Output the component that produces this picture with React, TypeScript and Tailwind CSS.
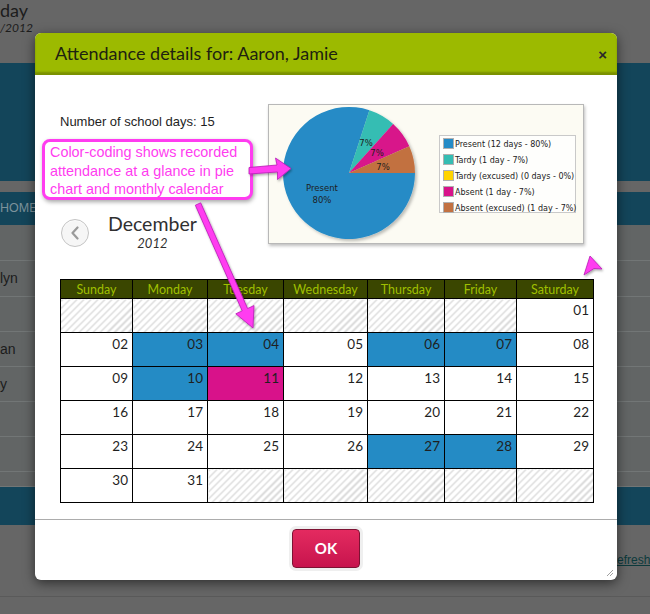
import React from "react"

const rows: (string | null)[][] = [
  [null, null, null, null, null, null, "01"],
  ["02", "03", "04", "05", "06", "07", "08"],
  ["09", "10", "11", "12", "13", "14", "15"],
  ["16", "17", "18", "19", "20", "21", "22"],
  ["23", "24", "25", "26", "27", "28", "29"],
  ["30", "31", null, null, null, null, null],
]
const present = new Set(["03", "04", "06", "07", "10", "27", "28"])
const absent = new Set(["11"])
const weekdays = ["Sunday", "Monday", "Tuesday", "Wednesday", "Thursday", "Friday", "Saturday"]
const colWidths = [72, 75, 76, 84, 77, 72, 77]

const legend = [
  { color: "#258bc6", label: "Present (12 days - 80%)" },
  { color: "#35bdb3", label: "Tardy (1 day - 7%)" },
  { color: "#ffd400", label: "Tardy (excused) (0 days - 0%)" },
  { color: "#d8128a", label: "Absent (1 day - 7%)" },
  { color: "#c27141", label: "Absent (excused) (1 day - 7%)" },
]

const hatch =
  "bg-[repeating-linear-gradient(135deg,#dcdcdc_0px,#dcdcdc_1.6px,#ffffff_1.6px,#ffffff_5px)]"

// background page rows (already dimmed by the modal overlay)
const pageRows = [
  { h: "h-[36px]", name: "" },
  { h: "h-[36px]", name: "lyn" },
  { h: "h-[35px]", name: "" },
  { h: "h-[35px]", name: "an" },
  { h: "h-[35px]", name: "y" },
  { h: "h-[35px]", name: "" },
  { h: "h-[35px]", name: "" },
  { h: "h-[15px]", name: "" },
]

const PieChart = () => (
  <svg width="314" height="138" viewBox="0 0 314 138" className="block">
    <defs>
      <filter id="pieShadow" x="-10%" y="-10%" width="130%" height="130%">
        <feDropShadow dx="2" dy="2" stdDeviation="1.5" floodColor="#000" floodOpacity="0.25" />
      </filter>
    </defs>
    <g filter="url(#pieShadow)">
      <path d="M80,68 L146,68 A66,66 0 1 1 100.39,5.23 Z" fill="#258bc6" />
      <path d="M80,68 L100.39,5.23 A66,66 0 0 1 124.16,18.95 Z" fill="#35bdb3" />
      <path d="M80,68 L124.16,18.95 A66,66 0 0 1 140.29,41.16 Z" fill="#d8128a" />
      <path d="M80,68 L140.29,41.16 A66,66 0 0 1 146,68 Z" fill="#c27141" />
    </g>
    <g fontFamily="'DejaVu Sans', sans-serif" fontSize="8.5" fill="#1e1e1e" textAnchor="middle">
      <text x="97" y="41">7%</text>
      <text x="108" y="51">7%</text>
      <text x="114" y="65">7%</text>
      <text x="53" y="86">Present</text>
      <text x="53" y="98">80%</text>
    </g>
    <rect x="170.5" y="30.5" width="136" height="77" fill="#fefefc" stroke="#c9c9c9" />
    {legend.map((l, i) => (
      <g key={l.label}>
        <rect x="174.5" y={33.5 + i * 16} width="10" height="10" fill={l.color} stroke="#b0b0b0" />
        <text
          x="186"
          y={42 + i * 16}
          fontFamily="'DejaVu Sans', sans-serif"
          fontSize="8"
          fill="#222"
        >
          {l.label}
        </text>
      </g>
    ))}
  </svg>
)

const Annotations = () => (
  <svg width="650" height="614" className="absolute left-0 top-0 pointer-events-none">
    <defs>
      <filter id="arrowShadow" x="-20%" y="-20%" width="140%" height="140%">
        <feDropShadow dx="1" dy="1.5" stdDeviation="1.2" floodColor="#000" floodOpacity="0.35" />
      </filter>
    </defs>
    <g fill="#ff3cf0" stroke="#b81cb5" strokeWidth="0.8" strokeLinejoin="round" filter="url(#arrowShadow)">
      <polygon points="249,167.5 277,165 275.5,158 291,168.5 277.5,179.5 277.5,172 249,174" />
      <polygon points="200.7,202.8 247.6,308.5 254,305.6 253,328 235.8,313.8 242.2,310.9 195.3,205.2" />
      <polygon points="590,256 602,269 594,268.5 584,275" />
    </g>
  </svg>
)

const Calendar = () => (
  <table className="border-collapse table-fixed w-[533px] font-['Lato',sans-serif]">
    <colgroup>
      {colWidths.map((w, i) => (
        <col key={i} style={{ width: w }} />
      ))}
    </colgroup>
    <thead>
      <tr className="h-[19px] bg-[#3a4600]">
        {weekdays.map((d) => (
          <th key={d} className="border border-black p-0 text-[12.5px] leading-[17px] font-normal text-[#9fbf00] text-center">
            {d}
          </th>
        ))}
      </tr>
    </thead>
    <tbody>
      {rows.map((r, ri) => (
        <tr key={ri} className="h-[34px]">
          {r.map((d, ci) => {
            let bg = "bg-white"
            if (d === null) bg = hatch
            else if (present.has(d)) bg = "bg-[#248bc5]"
            else if (absent.has(d)) bg = "bg-[#d8128a]"
            return (
              <td
                key={ci}
                className={`border border-black align-top text-right pr-[4px] pt-[3px] text-[13.5px] leading-[16px] text-[#1f1f1f] ${bg}`}
              >
                {d}
              </td>
            )
          })}
        </tr>
      ))}
    </tbody>
  </table>
)

const App = () => {
  return (
    <div className="relative w-[650px] h-[614px] overflow-hidden bg-[#666666] font-['Liberation_Sans',Arial,sans-serif]">
      {/* dimmed page behind the dialog */}
      <div className="h-[63px]">
        <div className="text-[18px] leading-[21px] text-[#1c1c1c] font-['Lato',sans-serif]">day</div>
        <div className="text-[12px] leading-[13px] italic text-[#1c1c1c] font-['Lato',sans-serif]">/2012</div>
      </div>
      <div className="h-[118px] bg-[#13455a]" />
      <div className="h-[11px]" />
      <div className="h-[33px] bg-[#13455a] flex items-center">
        <span className="text-[12.5px] text-[#7c929b]">HOME</span>
      </div>
      {pageRows.map((r, i) => (
        <div key={i} className={`${r.h} bg-[#626565] border-b border-[#727676] flex items-center`}>
          <span className="text-[14px] text-[#1c1c1c]">{r.name}</span>
        </div>
      ))}
      <div className="h-[38px] bg-[#13455a]" />
      <div className="ml-[617px] mt-[27px] text-[12px] leading-[16px] text-[#0c3a3c] underline whitespace-nowrap">efresh</div>
      <div className="mt-[28px] border-t border-[#5a5a5a]" />

      {/* dialog */}
      <div className="absolute left-[35px] top-[33px] w-[582px] rounded-[6px] bg-white shadow-[0_3px_12px_rgba(0,0,0,0.55)]">
        <div className="h-[42px] rounded-t-[6px] bg-[#9cba00] shadow-[inset_0_-3px_2px_rgba(60,70,0,0.35)] flex items-center justify-between pl-[20px] pr-[10px]">
          <span className="text-[18px] text-[#1e2210] font-['Lato',sans-serif] pb-[2px]">
            Attendance details for: Aaron, Jamie
          </span>
          <span className="text-[15px] font-bold text-[#2a2a2a] leading-none">×</span>
        </div>

        <div className="pt-[29px] pl-[25px] pr-[24px] pb-[16px]">
          <div className="flex h-[140px]">
            <div className="w-[208px] flex flex-col">
              <div className="mt-[10px] text-[13px] leading-[16px] text-[#1e1e1e]">Number of school days: 15</div>
              <div className="mt-[82px] flex items-start">
                <div className="mt-[7px] ml-[1px] w-[28px] h-[28px] rounded-full border border-[#c4c4c4] bg-[#f6f6f6] flex items-center justify-center shadow-[inset_0_1px_1px_rgba(255,255,255,0.8)]">
                  <svg width="10" height="14" viewBox="0 0 10 14">
                    <path d="M7.5,1.5 L2.5,7 L7.5,12.5" fill="none" stroke="#9a9a9a" strokeWidth="2.2" strokeLinecap="round" strokeLinejoin="round" />
                  </svg>
                </div>
                <div className="ml-[19px] flex flex-col items-center font-['Lato',sans-serif] text-[#303030]">
                  <span className="text-[19.5px] leading-[24px]">December</span>
                  <span className="text-[13px] leading-[14px] italic">2012</span>
                </div>
              </div>
            </div>
            <div className="w-[316px] h-[140px] border border-[#b8b8b8] bg-[#fcfbf3] shadow-[1px_2px_3px_rgba(0,0,0,0.25)]">
              <PieChart />
            </div>
          </div>
          <div className="mt-[35px]">
            <Calendar />
          </div>
        </div>

        <div className="h-[61px] border-t border-[#acacac] flex justify-center pt-[9px]">
          <button className="w-[68px] h-[39px] rounded-[4px] border border-[#7d1233] bg-linear-to-b from-[#e42a60] to-[#c7134d] text-white font-bold text-[15px] font-['Lato',sans-serif] ring-[3px] ring-[#efefef]">
            OK
          </button>
        </div>
        <svg width="9" height="9" viewBox="0 0 9 9" className="absolute right-[3px] bottom-[3px]">
          <path d="M8,2 L2,8 M8,5 L5,8" stroke="#a0a0a0" strokeWidth="1" />
        </svg>
      </div>

      {/* annotation callout */}
      <div className="absolute left-[42px] top-[139px] w-[211px] h-[61px] rounded-[8px] border-[3px] border-[#ff3cf0] bg-white shadow-[1px_2px_4px_rgba(0,0,0,0.35)] pl-[5px] pt-[1px] text-[14.4px] leading-[18.5px] text-[#ff3cf0] whitespace-nowrap">
        Color-coding shows recorded
        <br />
        attendance at a glance in pie
        <br />
        chart and monthly calendar
      </div>
      <Annotations />
    </div>
  )
}

export default App
